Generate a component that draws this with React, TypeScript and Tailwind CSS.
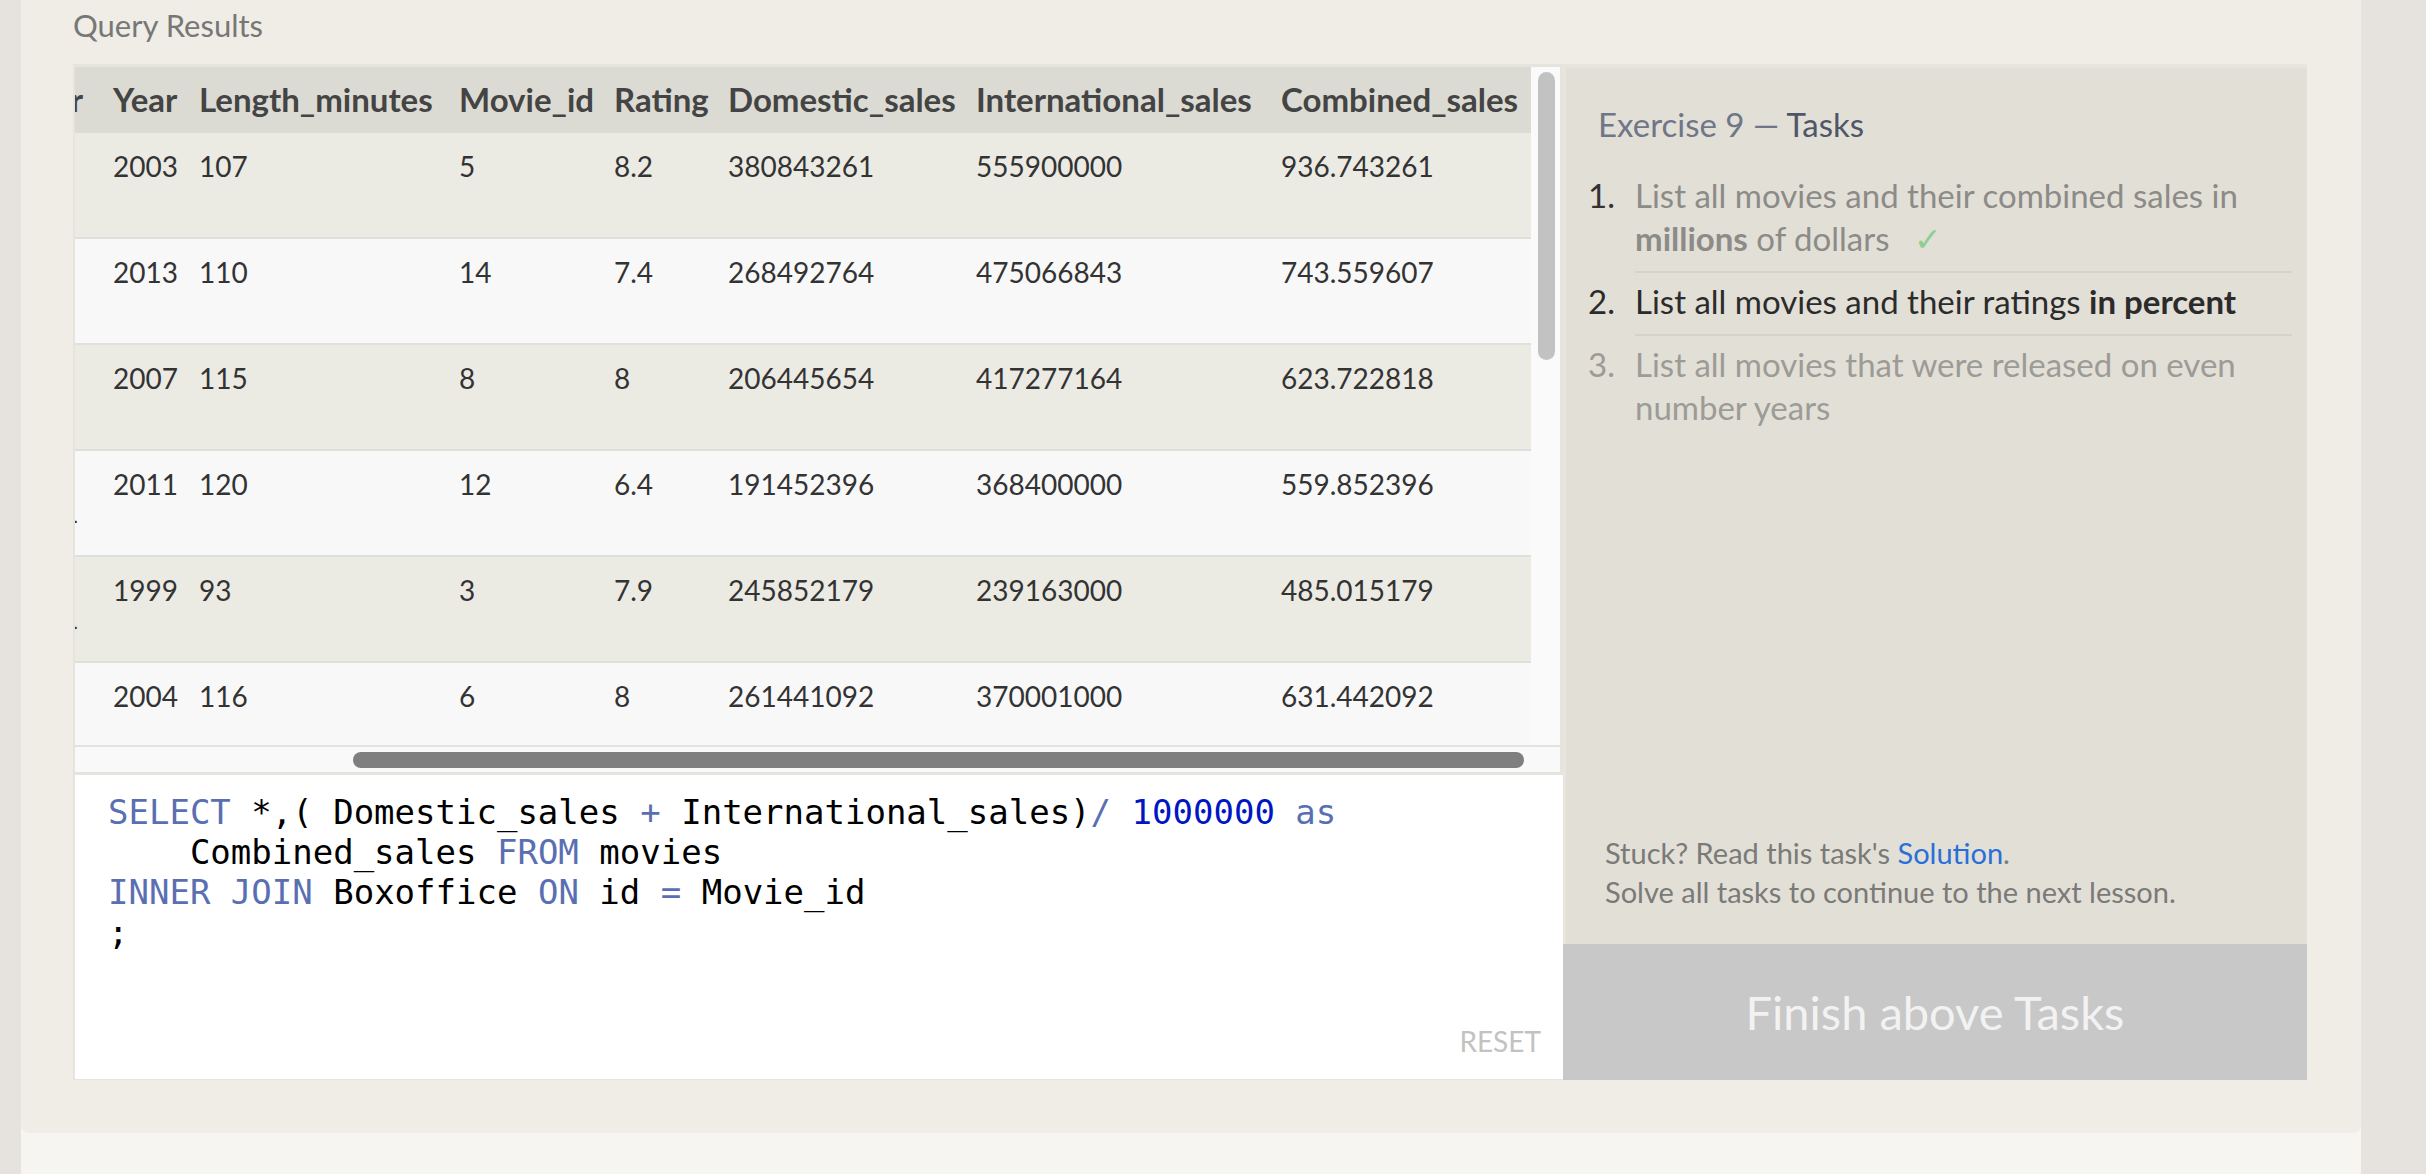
import React from "react";

const rows = [
  ["2003", "107", "5", "8.2", "380843261", "555900000", "936.743261"],
  ["2013", "110", "14", "7.4", "268492764", "475066843", "743.559607"],
  ["2007", "115", "8", "8", "206445654", "417277164", "623.722818"],
  ["2011", "120", "12", "6.4", "191452396", "368400000", "559.852396"],
  ["1999", "93", "3", "7.9", "245852179", "239163000", "485.015179"],
  ["2004", "116", "6", "8", "261441092", "370001000", "631.442092"],
];

const headers = [
  "Year",
  "Length_minutes",
  "Movie_id",
  "Rating",
  "Domestic_sales",
  "International_sales",
  "Combined_sales",
];

const gridCols =
  "grid grid-cols-[38px_86px_260px_155px_114px_248px_305px_250px]";

function Kw({ children }: { children: React.ReactNode }) {
  return <span className="text-[#5a6fb2]">{children}</span>;
}

function ResultsTable() {
  return (
    <div className="border-[3px] border-l-2 border-[#e6e4dd] bg-[#f9f9f9]">
      <div className="flex">
        <div className="h-[678px] w-[1456px] overflow-hidden">
          <div className={`${gridCols} h-[66px] items-center bg-[#dcdbd3] text-[33px] font-bold text-[#444]`}>
            <div className="flex justify-end overflow-hidden pr-[30px]">
              <span className="whitespace-nowrap">Director</span>
            </div>
            {headers.map((h) => (
              <div key={h} className="whitespace-nowrap">
                {h}
              </div>
            ))}
          </div>
          {rows.map((r, i) => (
            <div
              key={i}
              className={`${gridCols} h-[106px] border-b-2 border-[#dfdfdb] text-[28px] leading-[36px] text-[#333] ${
                i % 2 === 0 ? "bg-[#ebeae3]" : "bg-[#f8f8f8]"
              }`}
            >
              <div className="overflow-hidden pt-[15px]">
                <div className="h-[36px]" />
                {(i === 3 || i === 4) && <div className="-ml-[7px]">-</div>}
              </div>
              {r.map((c, j) => (
                <div key={j} className="pt-[15px]">
                  {c}
                </div>
              ))}
            </div>
          ))}
        </div>
        <div className="w-[29px] bg-[#fafafa] pt-[5px] pl-[7px]">
          <div className="h-[288px] w-[17px] rounded-full bg-[#c2c2c2]" />
        </div>
      </div>
      <div className="h-[27px] border-t-2 border-[#e2e2df] pt-[5px] pl-[278px]">
        <div className="h-[16px] w-[1171px] rounded-full bg-[#7f7f7f]" />
      </div>
    </div>
  );
}

function Editor() {
  return (
    <div className="flex h-[305px] flex-col border-b border-l-2 border-[#e6e4dd] bg-white pt-[17px] pl-[33px] pr-[22px]">
      <pre className="font-['DejaVu_Sans_Mono',monospace] text-[34px] leading-[40px] text-black">
        <Kw>SELECT</Kw> *,( Domestic_sales <Kw>+</Kw> International_sales)<Kw>/</Kw>{" "}
        <span className="text-[#0016c4]">1000000</span> <Kw>as</Kw>
        {"\n    "}Combined_sales <Kw>FROM</Kw> movies{"\n"}
        <Kw>INNER</Kw> <Kw>JOIN</Kw> Boxoffice <Kw>ON</Kw> id <Kw>=</Kw> Movie_id{"\n"};
      </pre>
      <div className="mt-auto mb-[17px] self-end text-[28px] text-[#c2c2c2]">RESET</div>
    </div>
  );
}

function TasksPanel() {
  return (
    <div className="flex w-[744px] flex-col">
      <div className="flex flex-1 flex-col border-t-4 border-l-[3px] border-[#e7e5de] bg-[#e2dfd7] pt-[38px] pb-[33px]">
        <h2 className="pl-[32px] text-[33px] leading-[36px] text-[#6f7687]">
          Exercise 9 — <span className="text-[#4f5667]">Tasks</span>
        </h2>
        <ol className="mt-[32px] text-[33px] leading-[43px]">
          <li className="flex pl-[22px]">
            <span className="w-[47px] shrink-0 text-[#333]">1.</span>
            <div className="w-[657px] border-b-2 border-[#d6d3ca] pb-[11px] text-[#8c8b87]">
              List all movies and their combined sales in <b className="font-bold">millions</b> of
              dollars <span className="ml-[16px] text-[#8fce8f]">✓</span>
            </div>
          </li>
          <li className="flex pl-[22px]">
            <span className="w-[47px] shrink-0 pt-[7px] text-[#2b2b2b]">2.</span>
            <div className="w-[657px] border-b-2 border-[#d6d3ca] pt-[7px] pb-[11px] text-[#2b2b2b]">
              List all movies and their ratings <b className="font-bold">in percent</b>
            </div>
          </li>
          <li className="flex pl-[22px]">
            <span className="w-[47px] shrink-0 pt-[7px] text-[#9c9b96]">3.</span>
            <div className="w-[657px] pt-[7px] text-[#9c9b96]">
              List all movies that were released on even number years
            </div>
          </li>
        </ol>
        <div className="mt-auto pl-[39px] text-[29px] leading-[39px] text-[#7a7a77]">
          <p>
            Stuck? Read this task's <span className="text-[#2a6fd8]">Solution</span>.
          </p>
          <p>Solve all tasks to continue to the next lesson.</p>
        </div>
      </div>
      <div className="flex h-[136px] items-center justify-center bg-[#c8c8c8] text-[47px] text-[#f2f2f2]">
        Finish above Tasks
      </div>
    </div>
  );
}

export default function App() {
  return (
    <div className="min-h-screen bg-[#e6e3df] font-['Lato',sans-serif]">
      <div className="ml-[21px] w-[2340px] bg-[#f6f5f1]">
        <div className="rounded-b-[8px] bg-[#f0ede6] pl-[52px] pr-[54px] pb-[53px]">
          <div className="h-[64px] pt-[7px] text-[31px] leading-[36px] text-[#777]">Query Results</div>
          <div className="flex">
            <div className="w-[1490px]">
              <ResultsTable />
              <Editor />
            </div>
            <TasksPanel />
          </div>
        </div>
        <div className="flex justify-between pt-[33px] pl-[145px] pr-[80px] text-[28px] leading-[36px]">
          <span className="text-[#6b7cc4]">Previous – SQL Lesson 8: A short note on NULLs</span>
          <span className="text-[#888]">Lesson 10: Queries with aggregates</span>
        </div>
      </div>
    </div>
  );
}
